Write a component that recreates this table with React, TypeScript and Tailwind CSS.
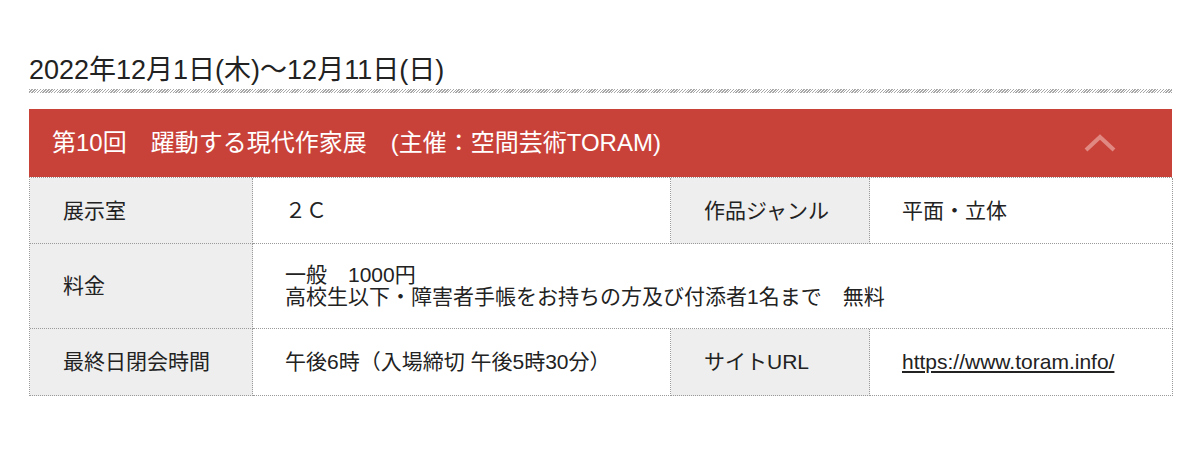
import React from "react";

const font = { fontFamily: '"Liberation Sans", "Noto Sans CJK JP", sans-serif' };

function Cell({
  children,
  label = false,
  className = "",
}: {
  children: React.ReactNode;
  label?: boolean;
  className?: string;
}) {
  return (
    <div
      className={`flex items-center border-r border-b border-dotted border-[#9a9a9a] text-[21px] leading-[22px] text-[#222] ${
        label ? "bg-[#eeeeee] pl-[33px]" : "bg-white pl-[32px]"
      } ${className}`}
    >
      {children}
    </div>
  );
}

export default function App() {
  return (
    <div className="min-h-[473px] bg-white pl-[29px] pt-[54px]" style={font}>
      <div className="w-[1143px]">
        <h2 className="text-[27px] leading-[32px] text-[#222]">
          2022年12月1日(木)〜12月11日(日)
        </h2>

        <div className="mt-[3px] h-[4px] bg-[repeating-linear-gradient(135deg,#a8a8a8_0px,#a8a8a8_1px,#ffffff_1px,#ffffff_2px)]" />

        <div className="mt-[16px] flex h-[68px] items-center justify-between bg-[#c9423a] pl-[23px] pr-[55px]">
          <span className="text-[24px] text-white">
            第10回　躍動する現代作家展　(主催：空間芸術TORAM)
          </span>
          <svg width="34" height="20" viewBox="0 0 34 20" fill="none">
            <polyline
              points="3,17 17,4 31,17"
              stroke="#e08983"
              strokeWidth="4"
              strokeLinejoin="miter"
            />
          </svg>
        </div>

        <div className="grid grid-cols-[223px_418px_199px_303px] border-t border-l border-dotted border-[#9a9a9a]">
          <Cell label className="h-[66px]">展示室</Cell>
          <Cell className="h-[66px]">２Ｃ</Cell>
          <Cell label className="h-[66px]">作品ジャンル</Cell>
          <Cell className="h-[66px]">平面・立体</Cell>

          <Cell label className="h-[85px]">料金</Cell>
          <Cell className="col-span-3 h-[85px]">
            <div>
              一般　1000円
              <br />
              高校生以下・障害者手帳をお持ちの方及び付添者1名まで　無料
            </div>
          </Cell>

          <Cell label className="h-[67px]">最終日閉会時間</Cell>
          <Cell className="h-[67px]">午後6時（入場締切 午後5時30分）</Cell>
          <Cell label className="h-[67px]">サイトURL</Cell>
          <Cell className="h-[67px]">
            <a href="https://www.toram.info/" className="underline text-[#222]">
              https://www.toram.info/
            </a>
          </Cell>
        </div>
      </div>
    </div>
  );
}
